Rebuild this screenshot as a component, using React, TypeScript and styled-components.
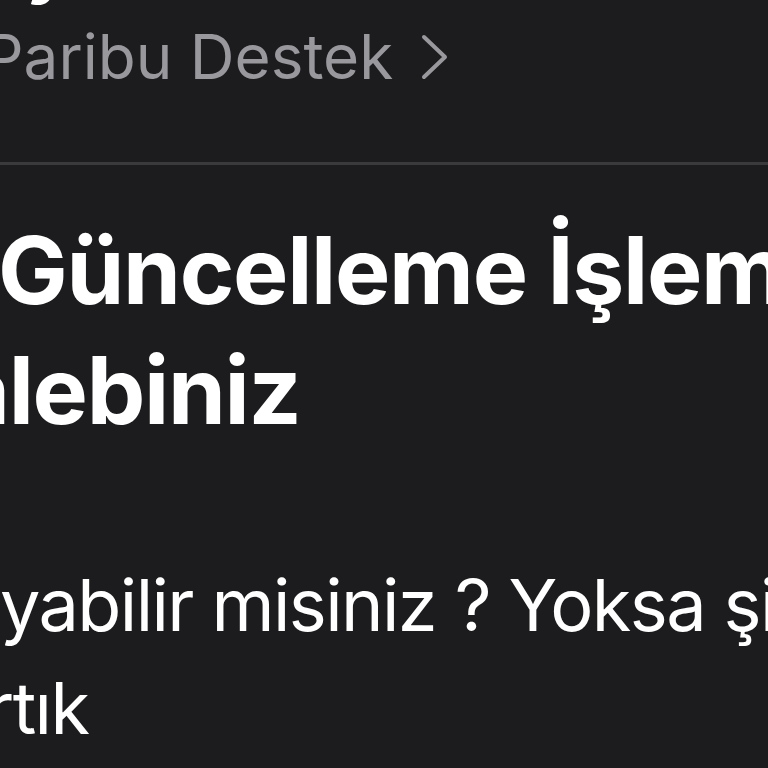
import React from "react";
import styled, { createGlobalStyle } from "styled-components";

const GlobalStyle = createGlobalStyle`
  html, body {
    margin: 0;
    padding: 0;
    background: #1c1c1e;
  }
  body {
    font-family: Inter, "Noto Sans", "Liberation Sans", sans-serif;
  }
`;

const Screen = styled.div`
  width: 768px;
  height: 768px;
  overflow: hidden;
  background: #1c1c1e;
  display: flex;
  flex-direction: column;
`;

const Line = styled.div<{ $shift?: number }>`
  white-space: nowrap;
  margin-left: ${(p) => p.$shift ?? 0}px;
`;

const SenderName = styled(Line)`
  margin-top: -72px;
  height: 72px;
  font-size: 72px;
  line-height: 72px;
  font-weight: 700;
  color: #ffffff;
`;

const SenderRow = styled.div`
  margin-top: 17px;
  display: flex;
  align-items: center;
  gap: 28px;
  height: 80px;
`;

const SenderLabel = styled(Line)`
  font-size: 62px;
  line-height: 80px;
  font-weight: 400;
  color: #98989d;
`;

const Chevron = styled.svg`
  width: 28px;
  height: 46px;
  flex: none;
`;

const Divider = styled.hr`
  margin: 65px 0 0;
  border: none;
  height: 3px;
  background: #3a3a3c;
`;

const Subject = styled.div`
  margin-top: 45px;
  font-size: 93px;
  line-height: 120px;
  font-weight: 700;
  letter-spacing: -1.3px;
  color: #ffffff;
`;

const Body = styled.div`
  margin-top: 103px;
  font-size: 72px;
  line-height: 103px;
  font-weight: 400;
  letter-spacing: -1.6px;
  color: #ffffff;
`;

export default function App() {
  return (
    <>
      <GlobalStyle />
      <Screen>
        <SenderName $shift={-114}>Onay</SenderName>
        <SenderRow>
          <SenderLabel $shift={-16}>Paribu Destek</SenderLabel>
          <Chevron viewBox="0 0 28 46">
            <polyline
              points="3,3 24,23 3,43"
              fill="none"
              stroke="#98989d"
              strokeWidth="4"
              strokeLinecap="round"
              strokeLinejoin="round"
            />
          </Chevron>
        </SenderRow>
        <Divider />
        <Subject>
          <Line $shift={-2}>Güncelleme İşlemi</Line>
          <Line $shift={-44}>alebiniz</Line>
        </Subject>
        <Body>
          <Line $shift={0}>yabilir misiniz ? Yoksa şifre</Line>
          <Line $shift={-14}>rtık</Line>
        </Body>
      </Screen>
    </>
  );
}
